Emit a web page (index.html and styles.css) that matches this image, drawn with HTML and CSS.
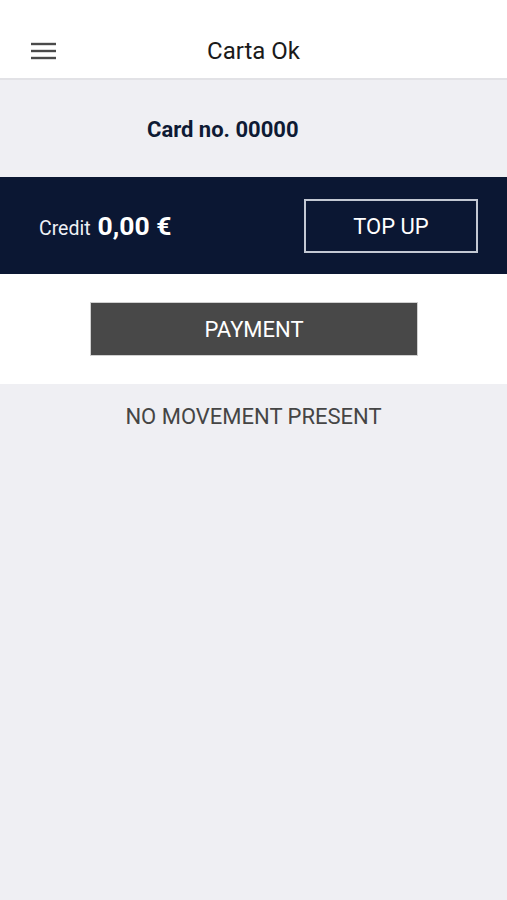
FILE: index.html
```html
<!DOCTYPE html>
<html>
<head>
<meta charset="utf-8">
<link rel="stylesheet" href="styles.css">
</head>
<body>
<div class="app">
  <header class="topbar">
    <span class="menu" aria-label="menu">
      <svg width="26" height="18" viewBox="0 0 26 18"><g stroke="#4a4a4a" stroke-width="2.4"><line x1="0" y1="2" x2="25" y2="2"/><line x1="0" y1="9" x2="25" y2="9"/><line x1="0" y1="16" x2="25" y2="16"/></g></svg>
    </span>
    <h1 class="title">Carta Ok</h1>
  </header>
  <section class="cardno"><span>Card no. 00000</span></section>
  <section class="credit">
    <div class="amount"><span class="label">Credit</span> <span class="value">0,00 €</span></div>
    <button class="topup">TOP UP</button>
  </section>
  <section class="pay">
    <button class="payment">PAYMENT</button>
  </section>
  <section class="moves">NO MOVEMENT PRESENT</section>
</div>
</body>
</html>
```
FILE: styles.css
```css
* { box-sizing: border-box; }
html, body { margin: 0; padding: 0; height: 100%; }
body { font-family: Roboto, "Noto Sans", sans-serif; background: #efeff3; }
.app { display: flex; flex-direction: column; min-height: 900px; }
.topbar {
  height: 80px; background: #fff; border-bottom: 2px solid #e2e2e6;
  display: flex; align-items: center; justify-content: center; position: relative;
  padding-top: 23px;
}
.menu { position: absolute; left: 31px; top: 42px; width: 26px; height: 18px; display: block; line-height: 0; }
.title { margin: 0; font-weight: 400; font-size: 24px; color: #1a1a1a; line-height: 1; }
.cardno {
  height: 97px; display: flex; align-items: center; padding-left: 147px; padding-top: 2px;
  font-weight: 700; font-size: 22px; color: #0e1a34;
}
.credit {
  height: 97px; background: #0b1733; display: flex; align-items: center;
  justify-content: space-between; padding: 0 29px 0 39px;
}
.amount { color: #fff; display: flex; align-items: baseline; gap: 7px; }
.label { font-size: 19.5px; color: #eef0f5; }
.value { font-size: 26.5px; font-weight: 700; }
.topup {
  width: 174px; height: 54px; background: transparent; border: 2px solid #c3c8d3;
  color: #fff; font-family: Roboto, sans-serif; font-size: 22px; padding: 0; margin-top: 1px;
}
.pay { height: 110px; background: #fff; display: flex; justify-content: center; align-items: center; }
.payment {
  width: 328px; height: 54px; background: #484848; border: 1px solid #d0d0d0;
  color: #fff; font-family: Roboto, sans-serif; font-size: 22px; padding: 0; margin-left: 1px;
}
.moves {
  flex: 1; text-align: center; padding-top: 21px;
  font-size: 22px; color: #454545; line-height: 24px;
}
```
